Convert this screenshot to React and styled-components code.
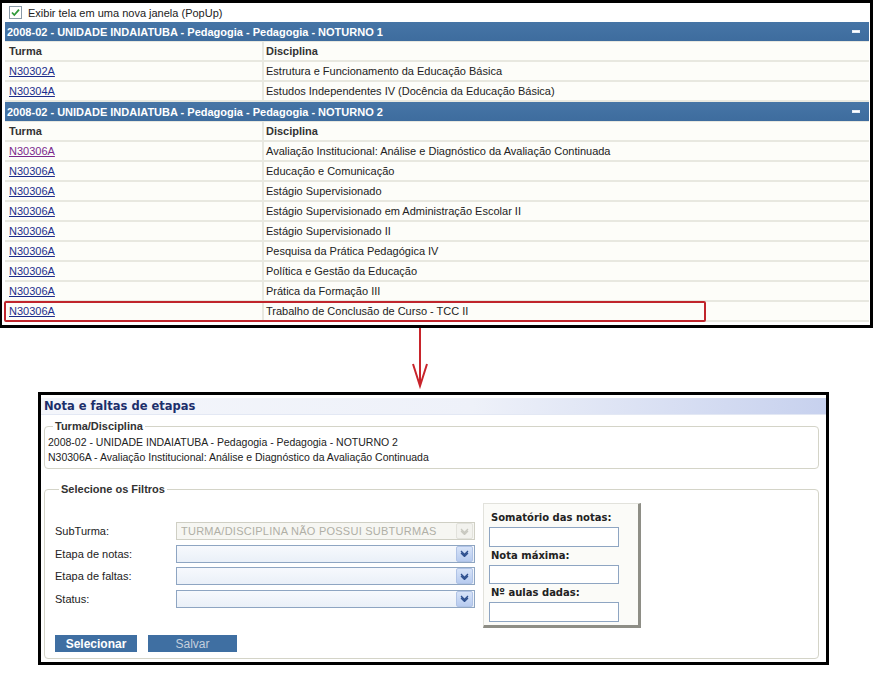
import React from "react";
import styled, { createGlobalStyle } from "styled-components";

const GlobalStyle = createGlobalStyle`
  html, body {
    margin: 0;
    padding: 0;
    background: #ffffff;
  }
  body {
    font-family: "Liberation Sans", Arial, sans-serif;
    font-size: 11px;
    color: #222;
  }
`;

const groups = [
  {
    title: "2008-02 - UNIDADE INDAIATUBA - Pedagogia - Pedagogia - NOTURNO 1",
    rows: [
      ["N30302A", "Estrutura e Funcionamento da Educação Básica"],
      ["N30304A", "Estudos Independentes IV (Docência da Educação Básica)"]
    ]
  },
  {
    title: "2008-02 - UNIDADE INDAIATUBA - Pedagogia - Pedagogia - NOTURNO 2",
    rows: [
      ["N30306A", "Avaliação Institucional: Análise e Diagnóstico da Avaliação Continuada", true],
      ["N30306A", "Educação e Comunicação"],
      ["N30306A", "Estágio Supervisionado"],
      ["N30306A", "Estágio Supervisionado em Administração Escolar II"],
      ["N30306A", "Estágio Supervisionado II"],
      ["N30306A", "Pesquisa da Prática Pedagógica IV"],
      ["N30306A", "Política e Gestão da Educação"],
      ["N30306A", "Prática da Formação III"],
      ["N30306A", "Trabalho de Conclusão de Curso - TCC II"]
    ]
  }
];

function CheckIcon() {
  return (
    <svg width="13" height="13" viewBox="0 0 13 13">
      <rect x="0.5" y="0.5" width="12" height="12" fill="#fff" stroke="#8a9aa8" />
      <path d="M3 6.5 L5.3 9 L10 3.6" fill="none" stroke="#2f9a3a" strokeWidth="1.8" />
    </svg>
  );
}

function Chevron({ disabled }) {
  return (
    <svg width="9" height="7" viewBox="0 0 9 7">
      <path
        d="M1 1 L4.5 4.5 L8 1 M1 3 L4.5 6.5 L8 3"
        fill="none"
        stroke={disabled ? "#c8c8c0" : "#2d4f8e"}
        strokeWidth="1.3"
      />
    </svg>
  );
}

function Select({ value, disabled }) {
  return (
    <SelectBox disabled={disabled}>
      <SelectText>{value}</SelectText>
      <SelectButton disabled={disabled}>
        <Chevron disabled={disabled} />
      </SelectButton>
    </SelectBox>
  );
}

export default function App() {
  return (
    <Root>
      <GlobalStyle />
      <TopFrame>
        <CheckRow>
          <CheckIcon />
          <span>Exibir tela em uma nova janela (PopUp)</span>
        </CheckRow>
        <Table>
          {groups.map((g, gi) => (
            <React.Fragment key={gi}>
              <GroupHeader>
                <span>{g.title}</span>
                <Minus />
              </GroupHeader>
              <Row>
                <HeadCell>Turma</HeadCell>
                <HeadCell>Disciplina</HeadCell>
              </Row>
              {g.rows.map((r, ri) => {
                const last = gi === 1 && ri === g.rows.length - 1;
                return (
                  <Row key={ri}>
                    <Cell>
                      <Link visited={r[2]}>{r[0]}</Link>
                    </Cell>
                    <Cell>{r[1]}</Cell>
                    {last && <Highlight />}
                  </Row>
                );
              })}
            </React.Fragment>
          ))}
        </Table>
      </TopFrame>

      <ArrowArea>
        <svg width="30" height="64" viewBox="0 0 30 64">
          <path d="M15 0 L15 56" stroke="#c8242b" strokeWidth="2" fill="none" />
          <path d="M8 36 L15 58 L22 36" stroke="#c8242b" strokeWidth="2" fill="none" />
        </svg>
      </ArrowArea>

      <BottomFrame>
        <TitleBar>Nota e faltas de etapas</TitleBar>
        <Fieldset>
          <Legend offset={5}>Turma/Disciplina</Legend>
          <InfoLine>2008-02 - UNIDADE INDAIATUBA - Pedagogia - Pedagogia - NOTURNO 2</InfoLine>
          <InfoLine>N30306A - Avaliação Institucional: Análise e Diagnóstico da Avaliação Continuada</InfoLine>
        </Fieldset>
        <FilterFieldset>
          <Legend offset={4}>Selecione os Filtros</Legend>
          <FilterBody>
            <FormCol>
              <FormRow>
                <Label>SubTurma:</Label>
                <Select disabled value="TURMA/DISCIPLINA NÃO POSSUI SUBTURMAS" />
              </FormRow>
              <FormRow>
                <Label>Etapa de notas:</Label>
                <Select />
              </FormRow>
              <FormRow>
                <Label>Etapa de faltas:</Label>
                <Select />
              </FormRow>
              <FormRow>
                <Label>Status:</Label>
                <Select />
              </FormRow>
            </FormCol>
            <Panel>
              <PanelLabel>Somatório das notas:</PanelLabel>
              <PanelInput />
              <PanelLabel>Nota máxima:</PanelLabel>
              <PanelInput />
              <PanelLabel>Nº aulas dadas:</PanelLabel>
              <PanelInput />
            </Panel>
          </FilterBody>
          <ButtonRow>
            <Button>Selecionar</Button>
            <Button disabled>Salvar</Button>
          </ButtonRow>
        </FilterFieldset>
      </BottomFrame>
    </Root>
  );
}

const Root = styled.div`
  display: flex;
  flex-direction: column;
  width: 873px;
  height: 684px;
  overflow: hidden;
`;

const TopFrame = styled.div`
  width: 864px;
  border: 3px solid #000;
  border-left-width: 2px;
  padding: 0 1px 3px 3px;
  display: flex;
  flex-direction: column;
`;

const CheckRow = styled.div`
  height: 19px;
  display: flex;
  align-items: center;
  gap: 6px;
  padding-left: 4px;
  color: #222;
`;

const Table = styled.div`
  display: flex;
  flex-direction: column;
  background: #e8e8e0;
`;

const GroupHeader = styled.div`
  height: 19px;
  margin-bottom: 1px;
  background: linear-gradient(#4675a6, #3e6c9e);
  color: #fff;
  font-weight: bold;
  display: flex;
  align-items: center;
  justify-content: space-between;
  padding: 0 9px 0 2px;
`;

const Minus = styled.div`
  width: 6px;
  height: 1px;
  background: #fff;
  border: 1px solid #e6edf6;
`;

const Row = styled.div`
  position: relative;
  height: 18px;
  margin-bottom: 2px;
  display: grid;
  grid-template-columns: 257px 1fr;
  column-gap: 2px;
`;

const Cell = styled.div`
  background: #fdfdf9;
  display: flex;
  align-items: center;
  padding-left: 4px;
  white-space: nowrap;
  &:nth-child(2) {
    padding-left: 2px;
  }
`;

const HeadCell = styled(Cell)`
  font-weight: bold;
  color: #333;
`;

const Link = styled.a`
  color: ${(p) => (p.visited ? "#7a2a8e" : "#1c2d8c")};
  text-decoration: underline;
  cursor: pointer;
`;

const Highlight = styled.div`
  position: absolute;
  left: -1px;
  top: -1px;
  width: 698px;
  height: 17px;
  border: 2px solid #c0252c;
  border-radius: 2px;
  pointer-events: none;
`;

const ArrowArea = styled.div`
  height: 64px;
  padding-left: 405px;
`;

const BottomFrame = styled.div`
  margin-left: 38px;
  width: 785px;
  height: 267px;
  border: 3px solid #000;
  display: flex;
  flex-direction: column;
`;

const TitleBar = styled.div`
  margin-top: 3px;
  height: 16px;
  padding-left: 3px;
  display: flex;
  align-items: center;
  font-family: "DejaVu Sans", Verdana, sans-serif;
  font-weight: bold;
  font-size: 11.5px;
  color: #1c2f6b;
  background: linear-gradient(90deg, #f4f6fb 0%, #eef1f9 55%, #c7d1ee 100%);
  border-bottom: 1px solid #e3e8f4;
`;

const Fieldset = styled.fieldset`
  margin: 5px 7px 0 3px;
  padding: 2px 0 3px 3px;
  border: 1px solid #d4d4c8;
  border-radius: 4px;
  min-width: 0;
`;

const FilterFieldset = styled(Fieldset)`
  margin-top: 14px;
  margin-bottom: 3px;
  padding: 0 0 0 10px;
  flex: 1;
`;

const Legend = styled.legend`
  margin-left: ${(p) => p.offset}px;
  padding: 0 2px;
  font-weight: bold;
  color: #333;
  font-size: 11px;
  line-height: 13px;
`;

const InfoLine = styled.div`
  line-height: 15px;
  font-size: 10.5px;
  color: #222;
  white-space: nowrap;
`;

const FilterBody = styled.div`
  display: flex;
  align-items: flex-start;
  gap: 8px;
`;

const FormCol = styled.div`
  display: flex;
  flex-direction: column;
  gap: 4.5px;
  padding-top: 26px;
`;

const FormRow = styled.div`
  display: grid;
  grid-template-columns: 121px 299px;
  align-items: center;
  height: 18px;
`;

const Label = styled.span`
  color: #222;
`;

const SelectBox = styled.div`
  height: 16px;
  display: flex;
  align-items: center;
  border: 1px solid ${(p) => (p.disabled ? "#cfcfc4" : "#8ea5c2")};
  background: ${(p) => (p.disabled ? "#f6f6f2" : "linear-gradient(#f7f9fd, #eaf0f8)")};
  padding-left: 4px;
`;

const SelectText = styled.span`
  flex: 1;
  color: #b0afa6;
  letter-spacing: 0.25px;
  white-space: nowrap;
  overflow: hidden;
`;

const SelectButton = styled.div`
  width: 15px;
  height: 14px;
  margin-right: 1px;
  display: flex;
  align-items: center;
  justify-content: center;
  border-radius: 2px;
  background: ${(p) =>
    p.disabled ? "#f2f2ee" : "linear-gradient(#d7e3f8, #b7cbef)"};
  border: 1px solid ${(p) => (p.disabled ? "#e2e2dc" : "#b0c3e6")};
`;

const Panel = styled.div`
  margin-top: 7px;
  width: 149px;
  height: 113px;
  padding: 8px 0 0 5px;
  background: #fbfbf8;
  border: 1px solid #e2e2dc;
  border-right: 3px solid #8e8e86;
  border-bottom: 3px solid #8e8e86;
  display: flex;
  flex-direction: column;
`;

const PanelLabel = styled.div`
  font-family: "DejaVu Sans", Verdana, sans-serif;
  font-weight: bold;
  font-size: 10px;
  color: #222;
  line-height: 12px;
  padding-left: 2px;
  margin-bottom: 3px;
`;

const PanelInput = styled.div`
  width: 128px;
  height: 18px;
  border: 1px solid #8ea5c2;
  background: #fff;
  margin-bottom: 3px;
`;

const ButtonRow = styled.div`
  display: flex;
  gap: 11px;
  margin-top: 7px;
`;

const Button = styled.div`
  width: ${(p) => (p.disabled ? 89 : 82)}px;
  height: 17px;
  display: flex;
  align-items: center;
  justify-content: center;
  background: #3f6fa2;
  color: ${(p) => (p.disabled ? "#c5d0de" : "#ffffff")};
  font-size: 12px;
  font-weight: ${(p) => (p.disabled ? "normal" : "bold")};
`;
